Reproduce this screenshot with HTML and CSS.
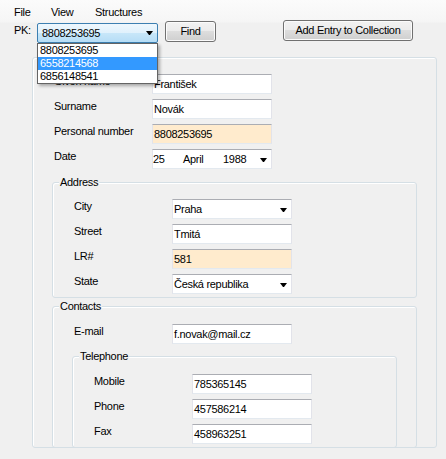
FILE: index.html
```html
<!DOCTYPE html>
<html>
<head>
<meta charset="utf-8">
<link rel="stylesheet" href="styles.css">
</head>
<body>
<div class="menubar">
  <span class="menu-item menu-file">File</span>
  <span class="menu-item menu-view">View</span>
  <span class="menu-item">Structures</span>
</div>
<div class="toolbar">
  <span class="pk-label">PK:</span>
  <div class="combo-hot">
    <span>8808253695</span>
    <svg class="arrow arrow-top" width="7" height="4" viewBox="0 0 7 4"><polygon points="0,0 7,0 4,4 3,4" fill="#000"/></svg>
  </div>
  <button class="btn btn-find">Find</button>
  <button class="btn btn-add">Add Entry to Collection</button>
  <ul class="droplist">
    <li>8808253695</li>
    <li class="sel">6558214568</li>
    <li>6856148541</li>
  </ul>
</div>
<div class="panel">
  <div class="rows">
    <div class="row"><span class="label">Given name</span><div class="field">František</div></div>
    <div class="row"><span class="label">Surname</span><div class="field">Novák</div></div>
    <div class="row"><span class="label">Personal number</span><div class="field readonly">8808253695</div></div>
    <div class="row"><span class="label">Date</span><div class="field date"><span class="d-day">25</span><span class="d-month">April</span><span>1988</span><svg class="arrow" width="7" height="4" viewBox="0 0 7 4"><polygon points="0,0 7,0 4,4 3,4" fill="#000"/></svg></div></div>
  </div>
  <div class="group address">
    <span class="group-title">Address</span>
    <div class="rows">
      <div class="row"><span class="label">City</span><div class="field">Praha<svg class="arrow" width="7" height="4" viewBox="0 0 7 4"><polygon points="0,0 7,0 4,4 3,4" fill="#000"/></svg></div></div>
      <div class="row"><span class="label">Street</span><div class="field">Tmitá</div></div>
      <div class="row"><span class="label">LR#</span><div class="field readonly">581</div></div>
      <div class="row"><span class="label">State</span><div class="field">Česká republika<svg class="arrow" width="7" height="4" viewBox="0 0 7 4"><polygon points="0,0 7,0 4,4 3,4" fill="#000"/></svg></div></div>
    </div>
  </div>
  <div class="group contacts">
    <span class="group-title">Contacts</span>
    <div class="row"><span class="label">E-mail</span><div class="field">f.novak@mail.cz</div></div>
    <div class="group telephone">
      <span class="group-title">Telephone</span>
      <div class="rows">
        <div class="row"><span class="label">Mobile</span><div class="field">785365145</div></div>
        <div class="row"><span class="label">Phone</span><div class="field">457586214</div></div>
        <div class="row"><span class="label">Fax</span><div class="field">458963251</div></div>
      </div>
    </div>
  </div>
</div>
</body>
</html>
```
FILE: styles.css
```css
* { box-sizing: border-box; }

body {
  margin: 0;
  width: 446px;
  height: 459px;
  overflow: hidden;
  background: #f0f0f0;
  color: #000;
  font-family: "Liberation Sans", Arial, sans-serif;
  font-size: 11px;
  line-height: 14px;
  letter-spacing: -0.3px;
}

.menubar {
  height: 20px;
  padding: 5px 0 0 14px;
  display: flex;
  background: linear-gradient(#fbfbfb, #f6f6f6);
}
.menu-file { width: 37px; }
.menu-view { width: 44px; }

.toolbar {
  position: relative;
  height: 24px;
  display: flex;
  align-items: flex-start;
  background: linear-gradient(#f6f6f6 0, #f5f5f5 2px, #f0f0f0 3px);
}

.pk-label {
  margin: 3px 0 0 14px;
  width: 23px;
}

.combo-hot {
  margin-top: 3px;
  width: 121px;
  height: 20px;
  border: 1px solid #3c7fb1;
  border-radius: 2px;
  background: linear-gradient(#eef7fd, #e0f1fc 50%, #c8e7f9 50%, #b6ddf6);
  display: flex;
  align-items: flex-start;
  padding-left: 4px;
  line-height: 18px;
}

.arrow {
  display: block;
  margin-left: auto;
  margin-right: 4px;
  margin-top: 8px;
  flex: none;
}
.arrow-top { margin-top: 7px; }

.btn {
  font: inherit;
  letter-spacing: inherit;
  color: #000;
  height: 21px;
  padding: 0;
  border: 1px solid #707070;
  border-radius: 3px;
  background: linear-gradient(#f2f2f2, #ebebeb 50%, #dddddd 50%, #cfcfcf);
  box-shadow: inset 0 0 0 1px #fbfbfb;
  line-height: 19px;
}
.btn-find { margin: 1px 0 0 7px; width: 51px; }
.btn-add { margin-left: 67px; width: 130px; }

.droplist {
  position: absolute;
  left: 37px;
  top: 23px;
  width: 121px;
  margin: 0;
  padding: 0;
  list-style: none;
  background: #fff;
  border: 1px solid #646464;
  box-shadow: 2px 2px 3px rgba(0, 0, 0, 0.3);
  z-index: 2;
}
.droplist li {
  height: 13px;
  line-height: 13px;
  padding-left: 2px;
}
.droplist .sel {
  background: #3399ff;
  color: #fff;
}

.panel {
  margin: 13px 0 0 32px;
  width: 405px;
  border: 1px solid #d5dfe5;
  border-radius: 3px;
  box-shadow: inset 1px 1px 0 #fff;
  padding: 16px 19px 0 19px;
}

.rows {
  display: flex;
  flex-direction: column;
  gap: 5px;
}

.row {
  display: flex;
  height: 20px;
}

.label {
  width: 100px;
  padding-left: 2px;
  line-height: 14px;
  flex: none;
}

.field {
  width: 120px;
  height: 20px;
  flex: none;
  border: 1px solid;
  border-color: #abadb3 #e2e3ea #e3e9ef #e2e3ea;
  background: #fff;
  padding-left: 1px;
  line-height: 18px;
  display: flex;
  align-items: flex-start;
  white-space: nowrap;
  overflow: hidden;
}
.field.readonly { background: #ffebcd; }
.field.date { padding-left: 0; }
.d-day { width: 30px; }
.d-month { width: 40px; }

.group {
  position: relative;
  border: 1px solid #d5dfe5;
  border-radius: 3px;
  box-shadow: inset 1px 1px 0 #fff;
  padding: 16px 19px 3px 19px;
}
.group-title {
  position: absolute;
  top: -8px;
  left: 6px;
  padding: 0 1px;
  background: #f0f0f0;
  line-height: 14px;
}

.address { margin-top: 13px; }

.contacts {
  margin-top: 8px;
  margin-bottom: -1px;
  padding-top: 17px;
  padding-bottom: 0;
}

.telephone {
  margin-top: 12px;
  margin-bottom: -1px;
  padding-top: 17px;
}
```
